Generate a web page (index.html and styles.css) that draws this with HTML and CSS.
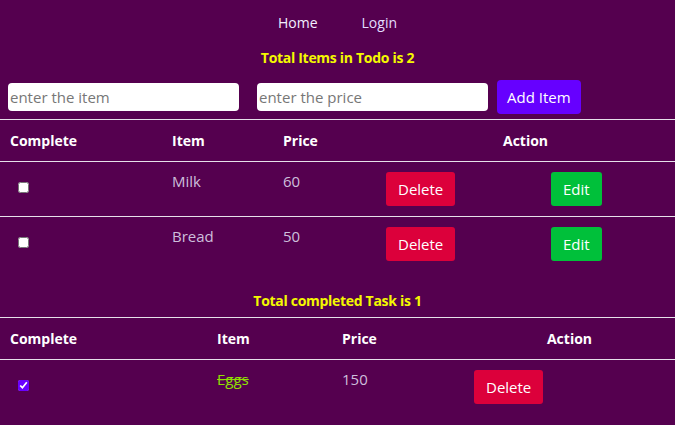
FILE: index.html
```html
<!DOCTYPE html>
<html lang="en">
<head>
<meta charset="utf-8">
<title>Todo</title>
<link rel="stylesheet" href="styles.css">
</head>
<body>
<nav class="nav">
  <a class="nav-link" href="#">Home</a>
  <a class="nav-link nav-link-alt" href="#">Login</a>
</nav>
<h3 class="title">Total Items in Todo is 2</h3>
<form class="add-form">
  <input class="field" type="text" placeholder="enter the item">
  <input class="field" type="text" placeholder="enter the price">
  <button class="btn btn-add" type="button">Add Item</button>
</form>
<table class="todo todo-open">
  <colgroup>
    <col class="c1"><col class="c2"><col class="c3"><col class="c4"><col class="c5">
  </colgroup>
  <thead>
    <tr><th>Complete</th><th>Item</th><th>Price</th><th class="th-action" colspan="2">Action</th></tr>
  </thead>
  <tbody>
    <tr class="row-line">
      <td class="cell-check"><input class="check" type="checkbox"></td>
      <td>Milk</td><td>60</td>
      <td><button class="btn btn-delete" type="button">Delete</button></td>
      <td><button class="btn btn-edit" type="button">Edit</button></td>
    </tr>
    <tr>
      <td class="cell-check"><input class="check" type="checkbox"></td>
      <td>Bread</td><td>50</td>
      <td><button class="btn btn-delete" type="button">Delete</button></td>
      <td><button class="btn btn-edit" type="button">Edit</button></td>
    </tr>
  </tbody>
</table>
<h3 class="title title-done">Total completed Task is 1</h3>
<table class="todo todo-done">
  <colgroup>
    <col class="d1"><col class="d2"><col class="d3"><col class="d4">
  </colgroup>
  <thead>
    <tr><th>Complete</th><th>Item</th><th>Price</th><th class="th-action">Action</th></tr>
  </thead>
  <tbody>
    <tr>
      <td class="cell-check"><input class="check" type="checkbox" checked></td>
      <td class="done-item">Eggs</td><td>150</td>
      <td><button class="btn btn-delete" type="button">Delete</button></td>
    </tr>
  </tbody>
</table>
</body>
</html>
```
FILE: styles.css
```css
html, body {
  margin: 0;
  padding: 0;
}
body {
  background: #55004f;
  font-family: "Open Sans", "Noto Sans", sans-serif;
  color: #fff;
}
.nav {
  display: flex;
  justify-content: center;
  gap: 44px;
  padding-top: 14px;
  font-size: 14px;
  line-height: 18px;
}
.nav-link {
  color: #f2f0ff;
  text-decoration: none;
}
.nav-link-alt {
  color: #e2deff;
}
.title {
  margin: 17px 0 0;
  text-align: center;
  color: #f4f800;
  font-size: 14px;
  line-height: 18px;
  font-weight: 700;
  letter-spacing: -0.3px;
}
.add-form {
  display: flex;
  align-items: center;
  margin: 13px 0 0;
  padding-left: 8px;
  height: 34px;
}
.field {
  width: 231px;
  height: 28px;
  box-sizing: border-box;
  border: none;
  border-radius: 4px;
  padding: 0 2px;
  font-family: inherit;
  font-size: 15px;
  color: #333;
  background: #fff;
  margin-right: 18px;
}
.field::placeholder {
  color: #777;
}
.field + .field {
  margin-right: 9px;
}
.btn {
  height: 34px;
  box-sizing: border-box;
  border: none;
  border-radius: 3px;
  padding: 0 12px;
  font-family: inherit;
  font-size: 15px;
  color: #fff;
  cursor: pointer;
}
.btn-add {
  background: #6600ff;
  border-radius: 4px;
  padding: 0 10px;
}
.btn-delete {
  background: #dc003b;
}
.btn-edit {
  background: #00c03a;
}
.todo {
  width: 100%;
  table-layout: fixed;
  border-collapse: separate;
  border-spacing: 0;
}
.todo-open {
  margin-top: 5px;
}
.c1 { width: 162px; }
.c2 { width: 111px; }
.c3 { width: 103px; }
.c4 { width: 165px; }
.c5 { width: 134px; }
.d1 { width: 207px; }
.d2 { width: 125px; }
.d3 { width: 132px; }
.d4 { width: 211px; }
.todo th {
  text-align: left;
  font-size: 14px;
  line-height: 18px;
  font-weight: 700;
  color: #fff;
  padding: 12px 10px 11px;
  border-top: 1px solid #e6e0ea;
  border-bottom: 1px solid #e6e0ea;
}
.todo th.th-action {
  text-align: center;
}
.todo td {
  vertical-align: top;
  padding: 10px;
  font-size: 15px;
  line-height: 18px;
  color: #cdbfdc;
}
.todo .row-line td {
  border-bottom: 1px solid #e6e0ea;
}
.todo td.cell-check {
  padding-left: 18px;
}
.check {
  display: block;
  width: 11px;
  height: 11px;
  margin: 10px 0 0;
  accent-color: #6a00ff;
}
.done-item {
  text-decoration: line-through;
}
.todo td.done-item {
  color: #8fe000;
}
.title-done {
  margin: 21px 0 7px;
}
```
